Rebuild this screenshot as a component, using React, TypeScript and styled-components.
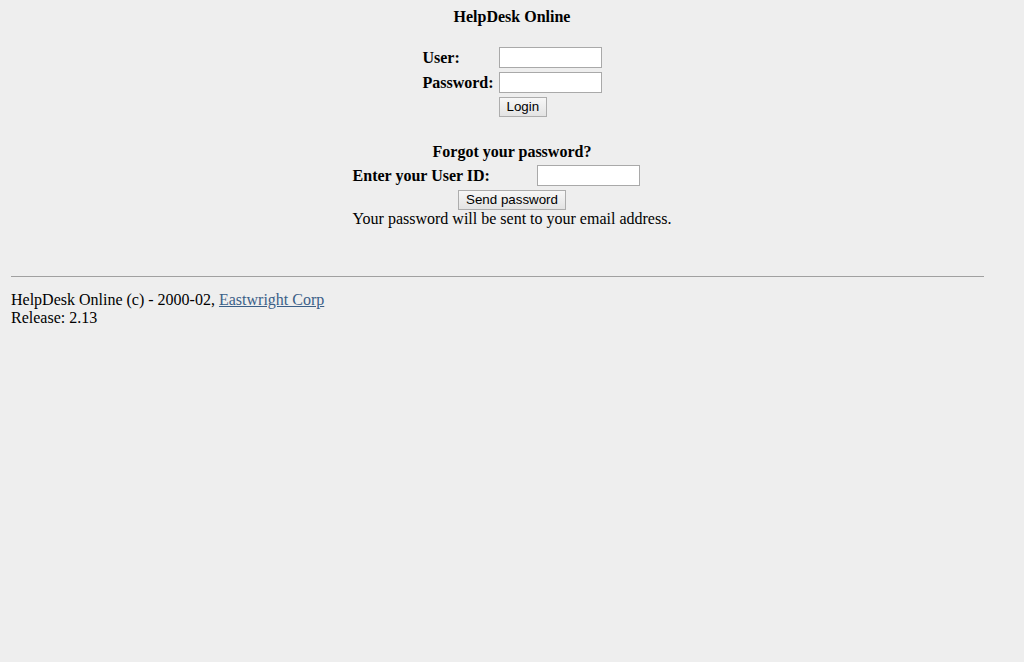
import React from "react";
import styled, { createGlobalStyle } from "styled-components";

const GlobalStyle = createGlobalStyle`
  html, body {
    margin: 0;
    padding: 0;
    background: #eeeeee;
  }
  body {
    font-family: "Liberation Serif", "Times New Roman", serif;
    font-size: 16px;
    line-height: 18px;
    color: #000000;
  }
`;

const Page = styled.div`
  padding: 8px 11px;
  display: flex;
  flex-direction: column;
`;

const Centered = styled.div`
  display: flex;
  flex-direction: column;
  align-items: center;
`;

const Title = styled.h1`
  margin: 0;
  font-size: 16px;
  line-height: 18px;
  font-weight: bold;
  text-align: center;
`;

const LoginGrid = styled.div`
  margin-top: 21px;
  display: grid;
  grid-template-columns: auto 103px;
  column-gap: 5px;
  row-gap: 4px;
  align-items: center;
`;

const Label = styled.label<{ $width?: number }>`
  font-weight: bold;
  font-size: 16px;
  line-height: 18px;
  white-space: nowrap;
  ${(p) => (p.$width ? `width: ${p.$width}px;` : "")}
`;

const TextInput = styled.input`
  box-sizing: border-box;
  width: 103px;
  height: 21px;
  margin: 0;
  padding: 1px 2px;
  border: 1px solid #a9a9a9;
  background: #ffffff;
  font-family: "Liberation Sans", Arial, sans-serif;
  font-size: 13.33px;
  outline: none;
`;

const Button = styled.button`
  box-sizing: border-box;
  height: 20px;
  margin: 0;
  padding: 0 7px;
  border: 1px solid #adadad;
  border-radius: 0;
  background: linear-gradient(#f7f7f7, #e3e3e3);
  font-family: "Liberation Sans", Arial, sans-serif;
  font-size: 13.33px;
  line-height: 16px;
  color: #000000;
  justify-self: start;
  align-self: center;
  white-space: nowrap;
`;

const ForgotBox = styled.div`
  margin-top: 26px;
  display: flex;
  flex-direction: column;
  align-items: stretch;
`;

const SubTitle = styled.h2`
  margin: 0;
  font-size: 16px;
  line-height: 18px;
  font-weight: bold;
  text-align: center;
`;

const IdRow = styled.div`
  margin-top: 4px;
  display: flex;
  align-items: center;
  height: 21px;
`;

const ButtonRow = styled.div`
  margin-top: 4px;
  display: flex;
  justify-content: center;
`;

const Note = styled.div`
  line-height: 18px;
  white-space: nowrap;
`;

const Rule = styled.hr`
  margin: 48px 0 0 0;
  width: 973px;
  height: 0;
  border: none;
  border-top: 1px solid #a0a0a0;
`;

const Footer = styled.div`
  margin-top: 14px;
  line-height: 18px;
`;

const FooterLink = styled.a`
  color: #3b5f88;
  text-decoration: underline;
`;

export default function App() {
  return (
    <>
      <GlobalStyle />
      <Page>
        <Centered>
          <Title>HelpDesk Online</Title>
          <LoginGrid>
            <Label htmlFor="user">User:</Label>
            <TextInput id="user" type="text" />
            <Label htmlFor="pwd">Password:</Label>
            <TextInput id="pwd" type="password" />
            <span />
            <Button type="button">Login</Button>
          </LoginGrid>
          <ForgotBox>
            <SubTitle>Forgot your password?</SubTitle>
            <IdRow>
              <Label htmlFor="uid" $width={184}>
                Enter your User ID:
              </Label>
              <TextInput id="uid" type="text" />
            </IdRow>
            <ButtonRow>
              <Button type="button">Send password</Button>
            </ButtonRow>
            <Note>Your password will be sent to your email address.</Note>
          </ForgotBox>
        </Centered>
        <Rule />
        <Footer>
          HelpDesk Online (c) - 2000-02,{" "}
          <FooterLink href="#">Eastwright Corp</FooterLink>
          <br />
          Release: 2.13
        </Footer>
      </Page>
    </>
  );
}
